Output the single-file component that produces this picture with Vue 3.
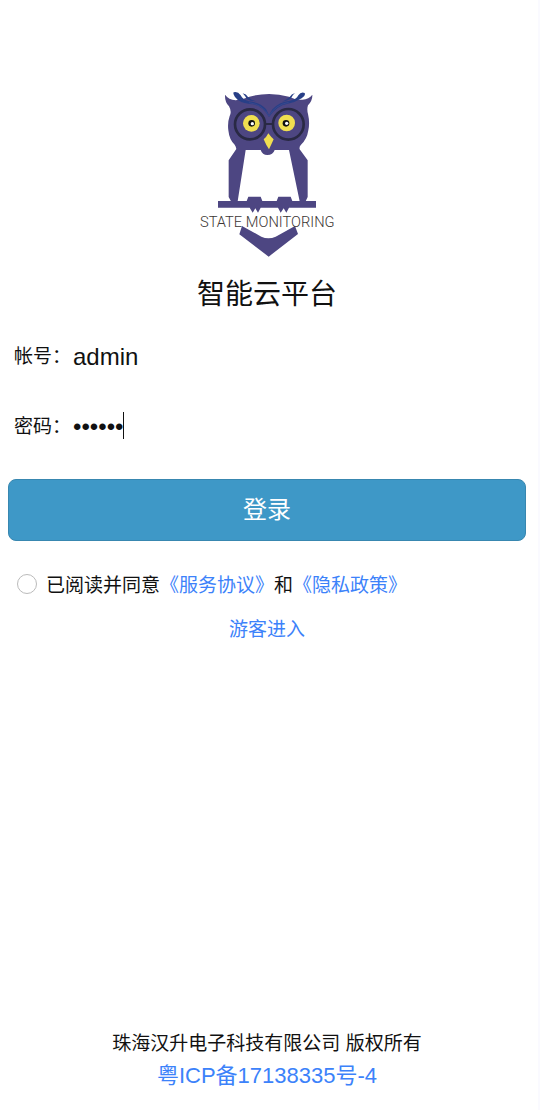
<script setup>
import { ref } from 'vue'

const account = ref('admin')
const password = ref('123456')
const agreed = ref(false)
</script>

<template>
  <div class="page">
    <main>
      <form class="login" @submit.prevent>
        <header class="brand">
          <svg class="logo" viewBox="24 30 414 504" role="img" aria-label="State Monitoring">
            <g fill="#4d4682">
              <path d="M105 44Q116 59 137 61Q158 59 178 50Q237 34 297 50Q319 61 337 59Q357 57 367 44Q368 61 354 76Q350 87 354 102Q360 128 355 151Q351 178 333 194Q327 199 329 208L353 241V351L347 364H329L297 210H254Q249 225 232 225Q217 225 212 210H167L143 364H123L116 351V241L139 207Q138 199 134 194Q118 180 115 151Q112 128 119 108Q126 95 117 79Q104 66 105 44Z" />
              <path d="M84 363H170L175 350H212L217 363H260L265 350H302L307 363H378V383H297L289 398L281 385L272 398L264 383H212L204 398L196 385L188 398L179 383H84Z" />
              <path d="M156 438L214 470Q235 479 257 470L315 438L324 462L236 530L148 463Z" />
            </g>
            <g fill="#283f87">
              <path d="M131 37Q143 33 152 46Q158 59 177 64Q210 67 228 87L237 105L246 89Q267 65 300 62Q319 59 325 46Q333 34 344 39Q348 47 335 55Q315 68 293 71Q260 77 237 111Q214 73 179 72Q147 68 135 51Q128 41 131 37Z" />
              <path d="M158 40Q169 42 174 51Q184 61 199 64Q181 64 171 58Q166 48 158 40Z" />
              <path d="M315 39Q304 42 299 51Q288 60 276 65Q296 62 303 55Q307 45 315 39Z" />
            </g>
            <g fill="none" stroke="#5a579a" stroke-width="1">
              <path d="M177 68Q218 73 237 108" />
              <path d="M237 108Q255 75 296 67" />
            </g>
            <g fill="none" stroke="#292944" stroke-width="8">
              <circle cx="180" cy="133" r="45" />
              <circle cx="295" cy="133" r="46" />
              <path d="M227 132H248" stroke-width="6" />
            </g>
            <g fill="#f0df50">
              <circle cx="184" cy="130" r="25" />
              <circle cx="290" cy="129" r="25" />
              <path d="M235 160Q243 171 251 178Q244 194 237 208Q228 195 221 178Q229 172 235 160Z" />
            </g>
            <g fill="#111">
              <circle cx="185" cy="130" r="10" />
              <circle cx="288" cy="130" r="10" />
            </g>
            <g fill="#fff">
              <circle cx="187" cy="131" r="5" />
              <circle cx="290" cy="130" r="5" />
            </g>
            <text x="232" y="440" text-anchor="middle">STATE MONITORING</text>
          </svg>
          <h1>智能云平台</h1>
        </header>

        <div class="field">
          <label for="account">帐号：</label>
          <input id="account" v-model="account" type="text" autocomplete="username">
        </div>
        <div class="field">
          <label for="password">密码：</label>
          <div class="secret">
            <input id="password" v-model="password" type="password" autocomplete="current-password">
            <span class="caret" aria-hidden="true"></span>
          </div>
        </div>

        <button type="submit">登录</button>

        <div class="agreement">
          <input id="agree" v-model="agreed" type="checkbox">
          <p><label for="agree">已阅读并同意</label><a href="#service">《服务协议》</a>和<a href="#privacy">《隐私政策》</a></p>
        </div>
        <a class="guest" href="#guest">游客进入</a>
      </form>
    </main>

    <footer>
      <p>珠海汉升电子科技有限公司 版权所有</p>
      <a class="icp" href="#icp">粤ICP备17138335号-4</a>
    </footer>
  </div>
</template>

<style>
body {
  margin: 0;
  background: #fff;
}
</style>

<style scoped>
.page {
  box-sizing: border-box;
  min-height: 100vh;
  padding: 90px 12px 17px 8px;
  border-right: 2px solid #fafaff;
  display: flex;
  flex-direction: column;
  justify-content: space-between;
  color: #111;
  font-family: "Liberation Sans", "Noto Sans CJK SC", sans-serif;
  font-size: 19px;
  line-height: 32px;
}

.login {
  display: flex;
  flex-direction: column;
}

.brand {
  display: flex;
  flex-direction: column;
  align-items: center;
  gap: 19px;
  margin-bottom: 24px;
}

.logo {
  width: 138px;
  height: 168px;
}

.logo text {
  fill: #3c3634;
  font-family: Roboto, sans-serif;
  font-size: 44px;
  font-weight: 300;
}

h1 {
  margin: 0;
  font-size: 28px;
  font-weight: 400;
  line-height: 36px;
}

.field {
  display: flex;
  align-items: center;
  height: 40px;
  margin-bottom: 30px;
  padding-left: 6px;
}

.field input {
  box-sizing: border-box;
  width: 100%;
  height: 36px;
  padding: 0;
  border: 0;
  outline: 0;
  background: transparent;
  color: inherit;
  font-family: inherit;
  font-size: 24px;
}

.field label {
  flex: none;
  margin-right: 2px;
}

.secret {
  position: relative;
  flex: 1;
  display: flex;
}

.caret {
  position: absolute;
  top: 3px;
  left: 50px;
  width: 1px;
  height: 27px;
  background: #111;
}

.secret input:focus + .caret {
  display: none;
}

button {
  height: 62px;
  margin-top: 2px;
  padding: 0 0 6px;
  border: 1px solid #3887b0;
  border-radius: 8px;
  background: #3e98c7;
  color: #fff;
  font-family: inherit;
  font-size: 24px;
}

.agreement {
  display: flex;
  align-items: flex-start;
  gap: 9px;
  margin-top: 29px;
  padding-left: 9px;
}

.agreement input {
  appearance: none;
  flex: none;
  width: 20px;
  height: 20px;
  margin: 4px 0 0;
  border: 1px solid #bbb;
  border-radius: 50%;
}

.agreement input:checked {
  border: 6px solid #3e98c7;
}

p {
  margin: 0;
}

a {
  color: #3c82fa;
  text-decoration: none;
}

.guest {
  align-self: center;
  margin-top: 12px;
}

footer {
  text-align: center;
}

.icp {
  font-size: 22px;
}
</style>
